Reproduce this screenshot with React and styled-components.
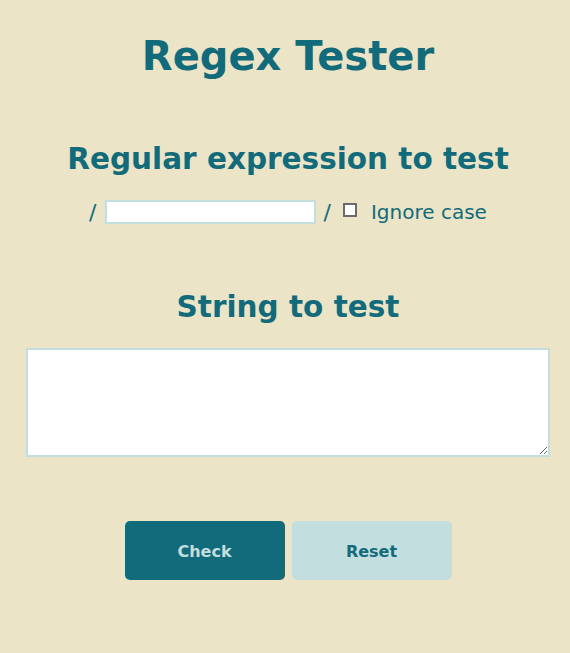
import React, { useState } from 'react'
import styled, { createGlobalStyle } from 'styled-components'

const Global = createGlobalStyle`
  html, body { margin: 0; padding: 0; background: #ebe4c7; }
  body { font-family: "DejaVu Sans", Verdana, sans-serif; color: #126b7a; }
`

const Page = styled.main`
  width: 570px;
  min-height: 653px;
  box-sizing: border-box;
  padding: 30px 20px 0 26px;
  display: flex;
  flex-direction: column;
  align-items: center;
`

const Title = styled.h1`
  margin: 0;
  font-size: 40px;
  line-height: 52px;
  font-weight: bold;
`

const Heading = styled.h2`
  margin: ${({ $top }) => $top}px 0 0;
  font-size: 29.5px;
  line-height: 38px;
  font-weight: bold;
`

const RegexRow = styled.div`
  margin-top: 21px;
  height: 26px;
  display: flex;
  align-items: center;
  gap: 8px;
  font-size: 20px;
`

const Slash = styled.span`
  font-size: 22px;
`

const PatternInput = styled.input`
  width: 211px;
  height: 24px;
  box-sizing: border-box;
  border: 2px solid #c2dedf;
  background: #fff;
  outline: none;
  padding: 0 4px;
`

const CaseLabel = styled.label`
  display: flex;
  align-items: center;
  gap: 14px;
  margin-left: 4px;
  cursor: pointer;
`

const Box = styled.span`
  width: 14px;
  height: 14px;
  box-sizing: border-box;
  border: 2px solid #6a6a6a;
  margin-top: -4px;
  background: ${({ $on }) => ($on ? '#126b7a' : '#fff')};
`

const TestArea = styled.textarea`
  margin-top: 22px;
  width: 524px;
  height: 109px;
  box-sizing: border-box;
  border: 2px solid #c2dedf;
  background: #fff;
  outline: none;
  resize: both;
`

const Buttons = styled.div`
  margin-top: 64px;
  display: flex;
  gap: 7px;
`

const Button = styled.button`
  width: 160px;
  height: 59px;
  padding: 2px 0 0;
  border: none;
  border-radius: 5px;
  font-family: "DejaVu Sans", Verdana, sans-serif;
  font-weight: bold;
  font-size: 16px;
  cursor: pointer;
  background: ${({ $primary }) => ($primary ? '#126b7a' : '#c2dedf')};
  color: ${({ $primary }) => ($primary ? '#c2dedf' : '#126b7a')};
`

export default function App() {
  const [pattern, setPattern] = useState('')
  const [text, setText] = useState('')
  const [ignoreCase, setIgnoreCase] = useState(false)

  const reset = () => {
    setPattern('')
    setText('')
    setIgnoreCase(false)
  }

  return (
    <>
      <Global />
      <Page>
        <Title>Regex Tester</Title>
        <Heading $top={58}>Regular expression to test</Heading>
        <RegexRow>
          <Slash>/</Slash>
          <PatternInput value={pattern} onChange={e => setPattern(e.target.value)} />
          <Slash>/</Slash>
          <CaseLabel onClick={() => setIgnoreCase(!ignoreCase)}>
            <Box $on={ignoreCase} />
            Ignore case
          </CaseLabel>
        </RegexRow>
        <Heading $top={63}>String to test</Heading>
        <TestArea value={text} onChange={e => setText(e.target.value)} />
        <Buttons>
          <Button $primary>Check</Button>
          <Button onClick={reset}>Reset</Button>
        </Buttons>
      </Page>
    </>
  )
}
